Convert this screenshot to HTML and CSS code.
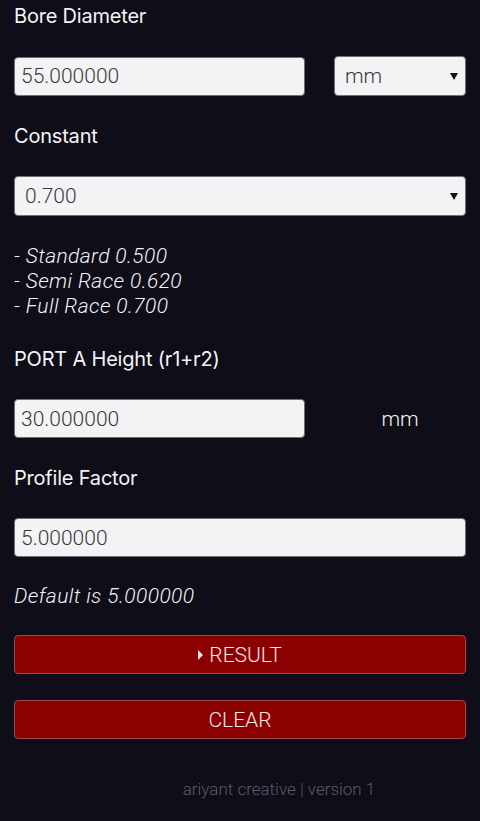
FILE: index.html
```html
<html lang="en">
<head>
  <meta charset="UTF-8">
  <meta name="viewport" content="width=device-width, initial-scale=1.0">
  <title>Port Calculator</title>
  <link rel="stylesheet" href="styles.css">
</head>
<body>
  <div class="calc">
    <label class="label" for="bore">Bore Diameter</label>
    <div class="row">
      <input id="bore" class="field" type="text" value="55.000000">
      <select class="field select">
        <option>mm</option>
        <option>inch</option>
      </select>
    </div>

    <label class="label" for="constant">Constant</label>
    <select id="constant" class="field select wide">
      <option>0.500</option>
      <option>0.620</option>
      <option selected>0.700</option>
    </select>

    <div class="note">
      - Standard 0.500<br>
      - Semi Race 0.620<br>
      - Full Race 0.700
    </div>

    <label class="label" for="port">PORT A Height (r1+r2)</label>
    <div class="row">
      <input id="port" class="field" type="text" value="30.000000">
      <span class="unit">mm</span>
    </div>

    <label class="label" for="profile">Profile Factor</label>
    <input id="profile" class="field" type="text" value="5.000000">

    <div class="note default">Default is 5.000000</div>

    <button class="btn"><span class="arrow"></span>RESULT</button>
    <button class="btn clear">CLEAR</button>

    <footer>ariyant creative | version 1</footer>
  </div>
</body>
</html>
```

FILE: styles.css
```css
body {
  margin: 0;
  background: #0e0d18;
  color: #f4f4f6;
  font-family: Roboto, "Liberation Sans", sans-serif;
}

.calc {
  display: flex;
  flex-direction: column;
  gap: 28px;
  padding: 4px 14px 20px;
}

.label {
  font-family: Inter, "Liberation Sans", sans-serif;
  font-weight: 400;
  font-size: 20px;
  line-height: 24px;
  letter-spacing: -0.2px;
}

.row {
  display: grid;
  grid-template-columns: 1fr 132px;
  gap: 29px;
  align-items: center;
}

.field {
  box-sizing: border-box;
  height: 39px;
  margin: 0;
  padding: 0 6px;
  background: #f3f3f5;
  border: 1px solid #6e6e76;
  border-radius: 4px;
  font-family: Roboto, "Liberation Sans", sans-serif;
  font-weight: 300;
  font-size: 21px;
  color: #3a3a3a;
  width: 100%;
}

.select {
  height: 40px;
  padding: 0 10px;
  appearance: none;
  -webkit-appearance: none;
  background-image: url("data:image/svg+xml,%3Csvg xmlns='http://www.w3.org/2000/svg' width='10' height='10'%3E%3Cpath d='M1 2h8L5 9z' fill='%23111'/%3E%3C/svg%3E");
  background-repeat: no-repeat;
  background-position: right 6px center;
}

.unit {
  text-align: center;
  font-weight: 300;
  font-size: 21px;
}

.note {
  font-style: italic;
  font-weight: 300;
  font-size: 21px;
  line-height: 25px;
  letter-spacing: 0.4px;
}

.default {
  margin: -1px 0 -2px;
}

.btn {
  height: 39px;
  margin: 0;
  background: #8b0000;
  border: 1px solid #9a4a4a;
  border-radius: 4px;
  color: #f6e6e6;
  font-family: Roboto, "Liberation Sans", sans-serif;
  font-weight: 300;
  font-size: 21px;
  display: flex;
  align-items: center;
  justify-content: center;
}

.clear {
  margin-top: -2px;
}

.arrow {
  width: 0;
  height: 0;
  border-left: 5px solid #f6e6e6;
  border-top: 5px solid transparent;
  border-bottom: 5px solid transparent;
  margin-right: 6px;
}

footer {
  margin-top: 10px;
  padding-left: 78px;
  text-align: center;
  color: #5a5c68;
  font-size: 17px;
  font-weight: 300;
  line-height: 24px;
}
```
